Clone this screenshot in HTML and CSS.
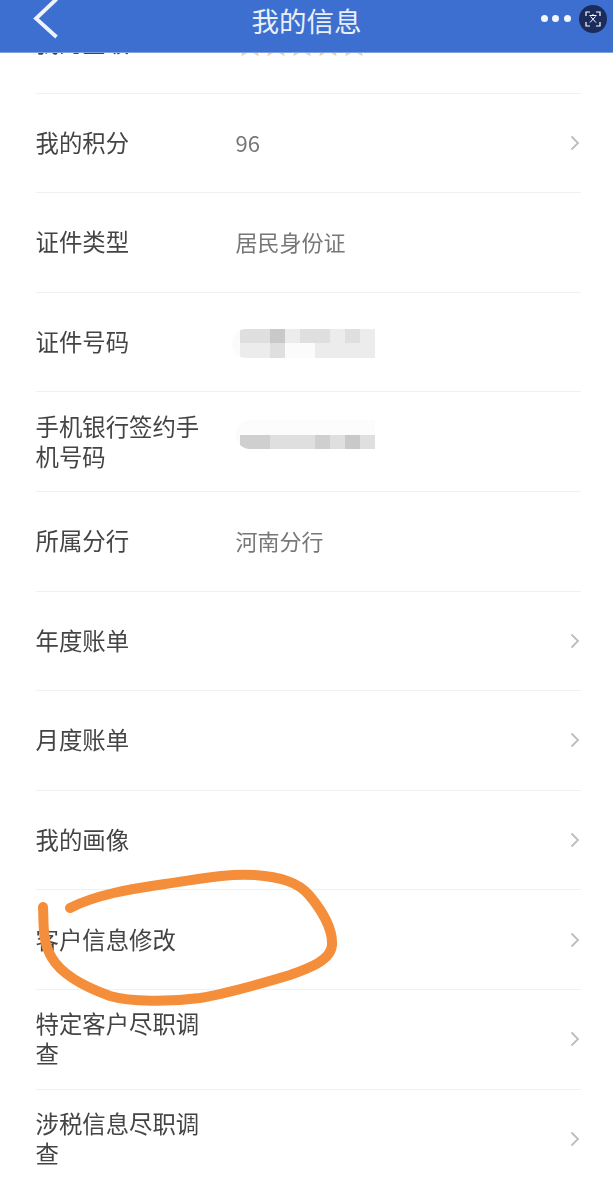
FILE: index.html
```html
<!DOCTYPE html>
<html lang="zh-CN">
<head>
<meta charset="utf-8">
<title>我的信息</title>
<link rel="stylesheet" href="styles.css">
</head>
<body>
<div class="page">
  <header class="topbar">
    <div class="topbar-left">
      <svg class="back" width="30" height="40" viewBox="0 0 30 40"><path d="M24.5 -1 L4 18.5 L24.5 37" fill="none" stroke="#eef3fb" stroke-width="3.8"/></svg>
    </div>
    <h1 class="title">我的信息</h1>
    <div class="topbar-right">
      <span class="dot"></span><span class="dot"></span><span class="dot"></span>
      <span class="badge">
        <svg width="28" height="28" viewBox="0 0 28 28">
          <path d="M7 11V7h4M17 7h4v4M21 17v4h-4M11 21H7v-4" fill="none" stroke="#fff" stroke-width="1.2"/>
          <path d="M10.5 10.5h7M14 9v1.5M11.5 11.5l5.5 6M16.5 11.5l-5.5 6" fill="none" stroke="#fff" stroke-width="1"/>
        </svg>
      </span>
    </div>
  </header>

  <main class="list">
    <div class="row">
      <div class="label">我的星级</div>
      <div class="value stars">
        <svg width="130" height="26" viewBox="0 0 130 26">
          <defs><path id="s" d="M13 1.5l3.4 7.6 8.2.8-6.2 5.4 1.9 8.1L13 19.2l-7.3 4.2 1.9-8.1-6.2-5.4 8.2-.8z" fill="none" stroke="#f0cf98" stroke-width="1.8"/></defs>
          <use href="#s"/><use href="#s" x="26"/><use href="#s" x="52"/><use href="#s" x="78"/><use href="#s" x="104"/>
        </svg>
      </div>
    </div>
    <div class="row">
      <div class="label">我的积分</div>
      <div class="value">96</div>
      <svg class="chev" width="10" height="16" viewBox="0 0 10 16"><path d="M1.5 1.5L8 8l-6.5 6.5" fill="none" stroke="#bdbdbd" stroke-width="1.8"/></svg>
    </div>
    <div class="row">
      <div class="label">证件类型</div>
      <div class="value">居民身份证</div>
    </div>
    <div class="row">
      <div class="label">证件号码</div>
      <div class="value">
        <div class="mosaic mosaic-id">
          <i class="m0"></i><i class="m2"></i><i class="m2"></i><i class="m4"></i><i class="m1"></i><i class="m2"></i><i class="m2"></i><i class="m1"></i><i class="m2"></i><i class="m1"></i>
          <i class="m0"></i><i class="m1"></i><i class="m1"></i><i class="m2"></i><i class="m0"></i><i class="m0"></i><i class="m1"></i><i class="m1"></i><i class="m1"></i><i class="m1"></i>
        </div>
      </div>
    </div>
    <div class="row">
      <div class="label">手机银行签约手机号码</div>
      <div class="value">
        <div class="mosaic mosaic-phone">
          <i class="m5"></i><i class="m5"></i><i class="m5"></i><i class="m5"></i><i class="m5"></i><i class="m5"></i><i class="m5"></i><i class="m5"></i><i class="m5"></i><i class="m5"></i>
          <i class="m0"></i><i class="m3"></i><i class="m3"></i><i class="m2"></i><i class="m2"></i><i class="m2"></i><i class="m3"></i><i class="m2"></i><i class="m4"></i><i class="m2"></i>
        </div>
      </div>
    </div>
    <div class="row">
      <div class="label">所属分行</div>
      <div class="value">河南分行</div>
    </div>
    <div class="row">
      <div class="label">年度账单</div>
      <div class="value"></div>
      <svg class="chev" width="10" height="16" viewBox="0 0 10 16"><path d="M1.5 1.5L8 8l-6.5 6.5" fill="none" stroke="#bdbdbd" stroke-width="1.8"/></svg>
    </div>
    <div class="row">
      <div class="label">月度账单</div>
      <div class="value"></div>
      <svg class="chev" width="10" height="16" viewBox="0 0 10 16"><path d="M1.5 1.5L8 8l-6.5 6.5" fill="none" stroke="#bdbdbd" stroke-width="1.8"/></svg>
    </div>
    <div class="row">
      <div class="label">我的画像</div>
      <div class="value"></div>
      <svg class="chev" width="10" height="16" viewBox="0 0 10 16"><path d="M1.5 1.5L8 8l-6.5 6.5" fill="none" stroke="#bdbdbd" stroke-width="1.8"/></svg>
    </div>
    <div class="row">
      <div class="label label-wide">客户信息修改</div>
      <div class="value"></div>
      <svg class="chev" width="10" height="16" viewBox="0 0 10 16"><path d="M1.5 1.5L8 8l-6.5 6.5" fill="none" stroke="#bdbdbd" stroke-width="1.8"/></svg>
    </div>
    <div class="row">
      <div class="label">特定客户尽职调查</div>
      <div class="value"></div>
      <svg class="chev" width="10" height="16" viewBox="0 0 10 16"><path d="M1.5 1.5L8 8l-6.5 6.5" fill="none" stroke="#bdbdbd" stroke-width="1.8"/></svg>
    </div>
    <div class="row">
      <div class="label">涉税信息尽职调查</div>
      <div class="value"></div>
      <svg class="chev" width="10" height="16" viewBox="0 0 10 16"><path d="M1.5 1.5L8 8l-6.5 6.5" fill="none" stroke="#bdbdbd" stroke-width="1.8"/></svg>
    </div>
  </main>

  <svg class="scribble" width="613" height="1187" viewBox="0 0 613 1187">
    <path d="M70 908C95 895 130 889 165 884C195 880 225 873 255 875C280 877 298 882 309 895C320 908 333 928 332 945C331 960 310 968 290 975C260 984 230 993 200 998C170 1002 130 1002 110 996C85 987 62 975 52 958C42 942 44 925 43 907" fill="none" stroke="#f58e3b" stroke-width="10" stroke-linecap="round" stroke-linejoin="round"/>
  </svg>
</div>
</body>
</html>
```
FILE: styles.css
```css
* { box-sizing: border-box; }
html, body { margin: 0; padding: 0; background: #fff; }
body { font-family: "Noto Sans CJK SC", "Noto Sans", sans-serif; overflow: hidden; }
.page { position: relative; width: 613px; height: 1187px; overflow: hidden; }

.topbar {
  position: absolute; top: 0; left: 0; right: 0; z-index: 2;
  height: 53px;
  display: grid; grid-template-columns: 1fr auto 1fr; align-items: start;
  background: #3d6fd0;
  border-bottom: 1px solid #7f9fdd;
}
.topbar-left { padding-left: 32px; }
.back { display: block; }
.title {
  margin: 0; color: #e9eff9;
  font-size: 27.5px; font-weight: 400; line-height: 40px;
}
.topbar-right {
  display: flex; align-items: center; justify-content: flex-end;
  gap: 4.5px; height: 36px; padding: 0 6px 0 0;
}
.dot { width: 7px; height: 7px; border-radius: 50%; background: #f2f6fd; }
.badge {
  width: 28px; height: 28px; border-radius: 50%; background: #1a2b5c;
  margin-left: 4px; margin-top: 1px;
}
.badge svg { display: block; }

.list { margin-top: -6px; padding: 0 32px 0 36px; filter: blur(0.35px); }
.row {
  display: flex; align-items: center;
  height: 99.6px;
  padding-bottom: 2px;
  border-bottom: 1px solid #f1f1f1;
}
.label {
  flex: 0 0 200px; padding-right: 31px; margin-left: -0.5px;
  color: #444; font-size: 23.4px; line-height: 30px;
}
.label-wide { padding-right: 0; }
.value { flex: 1; color: #777; font-size: 22px; line-height: 30px; }
.stars { padding-left: 1px; height: 26px; margin-top: 4px; }
.stars svg { display: block; }
.chev { flex: none; margin-right: 1px; margin-bottom: -2px; }

.mosaic {
  display: grid; grid-template-columns: 8px repeat(9, 15px); grid-auto-rows: 14.5px;
  width: 143px; margin-left: -4px; filter: blur(0.4px);
  border-radius: 14px 0 0 14px; overflow: hidden;
}
.mosaic-id { margin-top: 4px; }
.mosaic-phone { margin-top: -12px; margin-left: 0; grid-template-columns: 4px repeat(9, 15px); width: 139px; }
.mosaic i { display: block; }
.m0 { background: #fbfbfb; }
.m1 { background: #ececec; }
.m2 { background: #dfdfdf; }
.m3 { background: #cfcfcf; }
.m4 { background: #c9c9c9; }
.m5 { background: #fcfcfc; }

.scribble { position: absolute; top: 0; left: 0; z-index: 1; pointer-events: none; }
```
